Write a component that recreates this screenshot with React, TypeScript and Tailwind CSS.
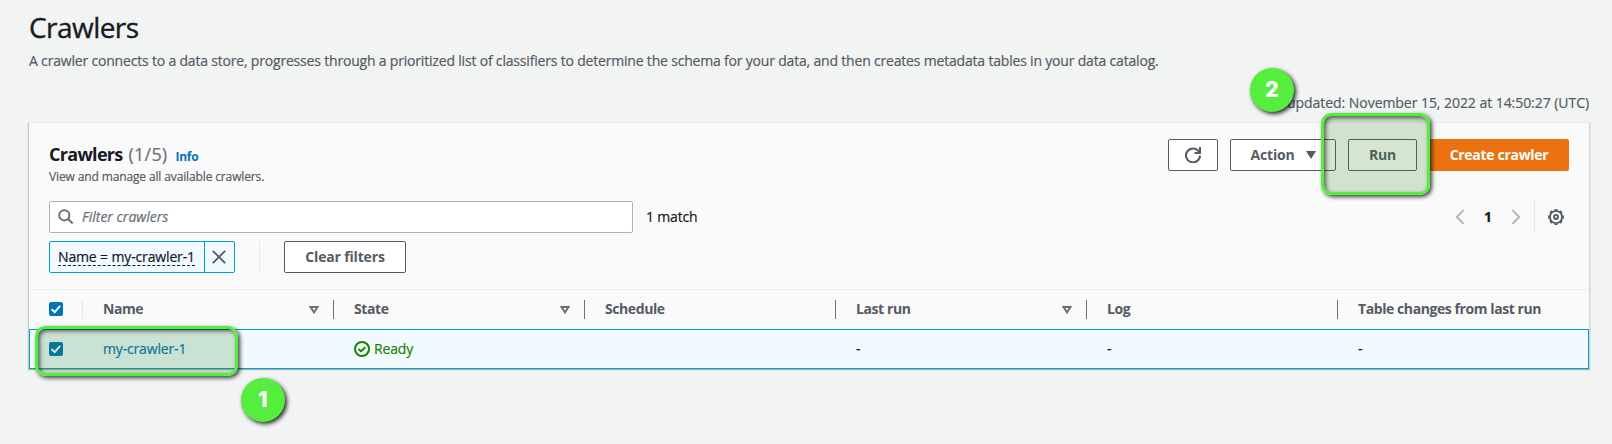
import React from "react";

type Column = { label: string; sortable: boolean; value: React.ReactNode };

const SearchIcon = () => (
  <svg width="16" height="16" viewBox="0 0 16 16" fill="none" stroke="#687078" strokeWidth="2">
    <circle cx="6.3" cy="6.3" r="5.1" />
    <path d="M10 10l4.7 4.5" />
  </svg>
);

const RefreshIcon = () => (
  <svg width="16" height="16" viewBox="0 0 16 16" fill="none" stroke="#545b64" strokeWidth="2">
    <path d="M15 8.6A7 7 0 1 1 13.6 4.2L14.6 5.5" />
    <path d="M15 0v6H9.5" />
  </svg>
);

const GearIcon = () => (
  <svg width="16" height="16" viewBox="0 0 16 16" fill="none" stroke="#545b64">
    <circle cx="8" cy="8" r="6.1" strokeWidth="1.9" />
    <circle cx="8" cy="8" r="7.3" strokeWidth="1.3" pathLength="80" strokeDasharray="5.6 4.4" strokeDashoffset="2.8" />
    <circle cx="8" cy="8" r="2" strokeWidth="1.9" />
  </svg>
);

const ReadyIcon = () => (
  <svg width="16" height="16" viewBox="0 0 16 16" fill="none" stroke="#1d8102" strokeWidth="2">
    <circle cx="8" cy="8" r="7" />
    <path d="M4.4 7.9l2.6 2.3 4.4-4" />
  </svg>
);

const CloseIcon = () => (
  <svg width="14" height="14" viewBox="0 0 14 14" fill="none" stroke="#545b64" strokeWidth="1.8">
    <path d="M.8 .8l12.4 12.4M13.2 .8L.8 13.2" />
  </svg>
);

const Chevron = ({ d }: { d: string }) => (
  <svg width="10" height="16" viewBox="0 0 10 16" fill="none" stroke="#aab7b8" strokeWidth="1.9">
    <path d={d} />
  </svg>
);

const SortIcon = () => (
  <svg width="10" height="8" viewBox="0 0 10 8" fill="none" stroke="#687078" strokeWidth="2">
    <path d="M1.5 1h7L5 6.3z" />
  </svg>
);

const Checkbox = () => (
  <span className="flex size-3.5 shrink-0 items-center justify-center rounded-[2px] bg-[#0073bb]">
    <svg width="14" height="14" viewBox="0 0 14 14" fill="none" stroke="#fff" strokeWidth="2">
      <path d="M2.5 7.2l3.2 2.9 5.4-6.3" />
    </svg>
  </span>
);

const columns: Column[] = [
  { label: "Name", sortable: true, value: <a className="text-[#0073bb]">my-crawler-1</a> },
  {
    label: "State",
    sortable: true,
    value: (
      <span className="flex items-center gap-1 text-[#1d8102]">
        <ReadyIcon />
        Ready
      </span>
    ),
  },
  { label: "Schedule", sortable: false, value: "" },
  { label: "Last run", sortable: true, value: "-" },
  { label: "Log", sortable: false, value: "-" },
  { label: "Table changes from last run", sortable: false, value: "-" },
];

const button =
  "flex h-8 shrink-0 items-center justify-center rounded-[2px] border border-[#545b64] bg-white font-bold text-[#545b64]";
const marker =
  "absolute flex size-11 items-center justify-center rounded-full bg-[#56ee3e] font-['Inter',sans-serif] text-[21px] tracking-normal font-extrabold text-white shadow-[2px_2px_4px_rgba(0,0,0,0.85)]";
const highlight =
  "absolute rounded-[10px] border-[3px] border-[#56ee3e] bg-[rgba(52,128,35,0.2)] shadow-[2px_2px_4px_rgba(0,0,0,0.75),inset_2px_2px_4px_rgba(0,0,0,0.6)]";

export default function App() {
  return (
    <div className="relative h-[444px] overflow-hidden bg-[#f2f3f3] pr-[22px] pl-7 pt-[9px] font-['Open_Sans','Noto_Sans',sans-serif] text-sm leading-[22px] tracking-[-0.16px] text-[#16191f] [-webkit-text-stroke:0.2px]">
      <h1 className="pl-px text-[28px] leading-9 tracking-[-0.55px] [-webkit-text-stroke:0.35px]">Crawlers</h1>
      <p className="mt-[5px] pl-px tracking-[-0.188px] text-[#545b64]">
        A crawler connects to a data store, progresses through a prioritized list of classifiers to determine the schema
        for your data, and then creates metadata tables in your data catalog.
      </p>
      <p className="mt-5 pr-px text-right tracking-[-0.05px] text-[#545b64]">
        updated: November 15, 2022 at 14:50:27 (UTC)
      </p>

      <section className="mt-2 border border-t-[#eaeded] border-r-[#cfd4d4] border-b-0 border-l-[#c4caca] bg-[#fafafa] shadow-[0_1px_1px_rgba(0,28,36,0.3)]">
        <header className="flex h-[78px] justify-between pt-4 pr-5 pl-5">
          <div className="pt-1">
            <h2 className="flex items-baseline text-lg leading-[22px] font-bold tracking-[-0.7px] [-webkit-text-stroke:0px]">
              Crawlers
              <span className="ml-[6px] font-normal tracking-[0.2px] text-[#687078] [-webkit-text-stroke:0.2px]">(1/5)</span>
              <a className="ml-2 text-xs leading-4 tracking-[-0.2px] text-[#0073bb]">Info</a>
            </h2>
            <p className="mt-1 text-xs leading-4 tracking-[-0.13px] text-[#545b64]">
              View and manage all available crawlers.
            </p>
          </div>
          <div className="flex gap-3 [-webkit-text-stroke:0px]">
            <button className={`${button} w-[50px]`}>
              <RefreshIcon />
            </button>
            <button className={`${button} w-[106px] gap-[11px]`}>
              Action
              <svg width="10" height="8" viewBox="0 0 10 8" fill="#545b64">
                <path d="M0 0h10L5 8z" />
              </svg>
            </button>
            <button className={`${button} w-[69px] tracking-[-0.2px]`}>Run</button>
            <button className="flex h-8 w-[140px] items-center justify-center rounded-[2px] bg-[#ec7211] font-bold tracking-[-0.3px] text-white">
              Create crawler
            </button>
          </div>
        </header>

        <div className="flex h-8 items-center px-5">
          <div className="flex h-8 w-[584px] items-center gap-2 rounded-[2px] border border-[#aab7b8] bg-white pl-2">
            <SearchIcon />
            <span className="tracking-normal text-[#687078] italic">Filter crawlers</span>
          </div>
          <span className="ml-[13px]">1 match</span>
          <div className="ml-auto flex h-8 items-center">
            <Chevron d="M8.6 1.2L1.8 8l6.8 6.8" />
            <span className="w-[46px] text-center font-bold">1</span>
            <Chevron d="M1.4 1.2L8.2 8l-6.8 6.8" />
            <div className="mr-[13px] ml-[13px] h-8 w-px bg-[#e3e7e7]" />
            <GearIcon />
            <div className="w-[5px]" />
          </div>
        </div>

        <div className="mt-2 flex h-8 items-center px-5">
          <div className="flex h-8 w-[186px] rounded-[2px] border border-[#00a1c9] bg-[#f1faff]">
            <div className="flex w-[155px] items-center border-r border-[#00a1c9] pl-2">
              <span className="border-b border-dashed border-[#16191f] leading-[17px] tracking-[-0.14px] whitespace-nowrap">
                Name = my-crawler-1
              </span>
            </div>
            <div className="flex flex-1 items-center justify-center pr-px">
              <CloseIcon />
            </div>
          </div>
          <div className="mr-6 ml-6 h-8 w-px bg-[#e6eaea]" />
          <button className={`${button} w-[122px] [-webkit-text-stroke:0px]`}>Clear filters</button>
        </div>

        <div className="mt-4 flex h-10 items-start border-t border-[#eaeded] pt-2.5 pl-5 font-bold tracking-[-0.42px] text-[#545b64] [-webkit-text-stroke:0px]">
          <div className="pt-0.5">
            <Checkbox />
          </div>
          <div className="ml-[19px] h-[19px] w-px bg-[#e3e7e7]" />
          {columns.map((c, i) => (
            <div
              key={c.label}
              className={`flex h-[19px] items-center justify-between pr-3.5 pl-5 ${
                i === columns.length - 1 ? "flex-1" : "w-[251px] border-r border-[#687078]"
              }`}
            >
              <span className="pb-0.5">{c.label}</span>
              {c.sortable && <SortIcon />}
            </div>
          ))}
        </div>

        <div className="flex h-10 items-center border border-[#00a1c9] bg-[#f1faff] pl-[19px]">
          <Checkbox />
          <div className="w-5" />
          {columns.map((c, i) => (
            <div key={c.label} className={i === columns.length - 1 ? "flex-1 pl-5" : "w-[251px] pl-5"}>
              {c.value}
            </div>
          ))}
        </div>
      </section>

      <div className={`${highlight} top-[326px] left-[35px] h-[50px] w-[203px]`} />
      <div className={`${marker} top-[378px] left-[241px]`}>1</div>
      <div className={`${highlight} top-[113px] left-[1321px] h-[82px] w-[109px]`} />
      <div className={`${marker} top-[68px] left-[1250px]`}>2</div>
    </div>
  );
}
